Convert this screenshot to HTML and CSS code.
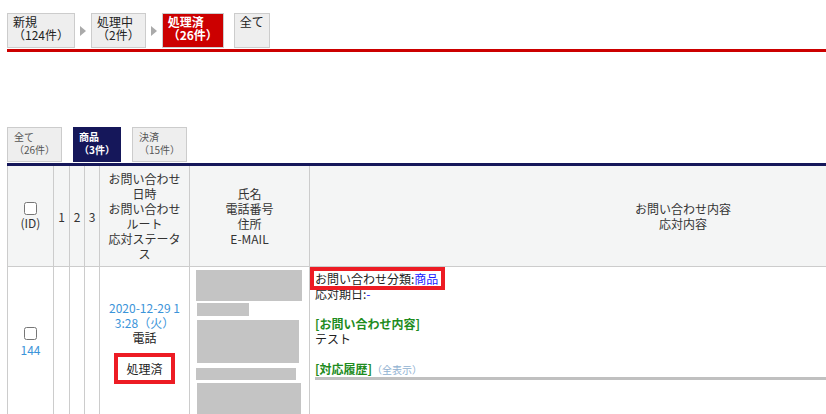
FILE: index.html
```html
<!DOCTYPE html>
<html lang="ja">
<head>
  <meta charset="UTF-8">
  <meta name="viewport" content="width=device-width, initial-scale=1.0">
  <title>お問い合わせ管理</title>
  <link rel="stylesheet" href="styles.css">
</head>
<body>
  <!-- Status tabs -->
  <div class="status-tabs">
    <a href="#" class="tab">新規<br>（124件）</a>
    <span class="arrow"></span>
    <a href="#" class="tab">処理中<br>（2件）</a>
    <span class="arrow"></span>
    <a href="#" class="tab tab-active">処理済<br>（26件）</a>
    <a href="#" class="tab tab-all">全て</a>
  </div>

  <!-- Category tabs -->
  <div class="category-tabs">
    <a href="#" class="cat-tab">全て<br>（26件）</a>
    <a href="#" class="cat-tab cat-tab-active">商品<br>（3件）</a>
    <a href="#" class="cat-tab">決済<br>（15件）</a>
  </div>

  <table class="inquiry-table">
    <colgroup>
      <col class="w-id">
      <col class="w-num">
      <col class="w-num2">
      <col class="w-num2">
      <col class="w-date">
      <col class="w-name">
      <col class="w-body">
    </colgroup>
    <thead>
      <tr>
        <th><input type="checkbox" class="check">(ID)</th>
        <th class="num">1</th>
        <th class="num">2</th>
        <th class="num">3</th>
        <th class="wrap">お問い合わせ日時<br>お問い合わせルート<br>応対ステータス</th>
        <th>氏名<br>電話番号<br>住所<br>E-MAIL</th>
        <th>お問い合わせ内容<br>応対内容</th>
      </tr>
    </thead>
    <tbody>
      <tr>
        <td class="cell-check">
          <input type="checkbox" class="check">
          <a href="#" class="id-link">144</a>
        </td>
        <td class="num"></td>
        <td class="num"></td>
        <td class="num"></td>
        <td class="cell-date wrap">
          <div class="date">2020-12-29 13:28（火）</div>
          <div>電話</div>
          <div class="status">処理済</div>
        </td>
        <td class="cell-name">
          <div class="redact r1"></div>
          <div class="redact r2"></div>
          <div class="redact r3"></div>
          <div class="redact r4"></div>
          <div class="redact r5"></div>
        </td>
        <td class="cell-body">
          <div><span class="highlight">お問い合わせ分類:<a href="#" class="link">商品</a></span></div>
          <div>応対期日:<span class="link">-</span></div>
          <div class="section-title">[お問い合わせ内容]</div>
          <div>テスト</div>
          <div class="section-title history">[対応履歴]<a href="#" class="more">（全表示）</a></div>
        </td>
      </tr>
    </tbody>
  </table>
</body>
</html>
```

FILE: styles.css
```css
/* General */
html {
  overflow: hidden;
}
body {
  margin: 0;
  background: #fff;
  color: #222;
  font-family: "Noto Sans CJK JP", sans-serif;
  font-size: 12px;
  overflow: hidden;
}
a {
  text-decoration: none;
}

/* Status tabs */
.status-tabs {
  display: flex;
  margin: 13px 0 0 7px;
  padding-bottom: 1px;
  border-bottom: 3px solid #cc0000;
}
.tab {
  box-sizing: border-box;
  height: 35px;
  padding: 1px 5px 0;
  border: 1px solid #ccc;
  background: #eee;
  color: #222;
  line-height: 13px;
}
.tab-active {
  background: #cc0000;
  color: #fff;
  font-weight: bold;
}
.tab-all {
  margin-left: 10px;
}
.arrow {
  align-self: center;
  width: 0;
  height: 0;
  margin: 1px 5px 0;
  border-left: 6px solid #aaa;
  border-top: 5px solid transparent;
  border-bottom: 5px solid transparent;
}

/* Category tabs */
.category-tabs {
  display: flex;
  gap: 11px;
  margin: 75px 0 0 7px;
  padding-bottom: 1px;
  border-bottom: 3px solid #15175a;
}
.cat-tab {
  box-sizing: border-box;
  height: 35px;
  padding: 3px 6px 0;
  border: 1px solid #ccc;
  background: #eee;
  color: #555;
  font-size: 10px;
  line-height: 12.5px;
}
.cat-tab-active {
  padding: 3px 5px 0;
  background: #15175a;
  border-color: #15175a;
  color: #fff;
  font-weight: bold;
}

/* Table */
.inquiry-table {
  margin-left: 7px;
  width: 1049px;
  border-collapse: collapse;
  table-layout: fixed;
  line-height: 15px;
}
.w-id { width: 46px; }
.w-num { width: 16px; }
.w-num2 { width: 15px; }
.w-date { width: 90px; }
.w-name { width: 120px; }
.w-body { width: 747px; }

.inquiry-table th,
.inquiry-table td {
  border: 1px solid #ccc;
}
.inquiry-table thead th {
  border-top: none;
  padding: 5px 7px;
  background: #f4f5f5;
  color: #333;
  font-weight: normal;
  text-align: center;
  vertical-align: middle;
}
.inquiry-table .num {
  padding: 5px 0;
  text-align: center;
}
.wrap {
  word-break: break-all;
}
.check {
  display: block;
  margin: 0 auto;
  width: 13px;
  height: 13px;
}

.cell-check {
  text-align: center;
  vertical-align: middle;
}
.id-link {
  display: block;
  margin-top: 2px;
  color: #3b94d9;
}
.cell-date {
  padding: 0 7px;
  text-align: center;
  vertical-align: middle;
}
.date {
  color: #3b94d9;
}
.status {
  width: fit-content;
  margin: 8px auto 0;
  padding: 4px 8px;
  border: 4px solid #ed1c24;
}

/* Redacted personal data */
.cell-name {
  padding: 3px 6px 2px;
  vertical-align: top;
}
.redact {
  background: #c4c4c4;
}
.r1 { width: 106px; height: 31px; }
.r2 { width: 52px; height: 13px; margin: 2px 0 0 1px; }
.r3 { width: 102px; height: 43px; margin: 4px 0 0 1px; }
.r4 { width: 100px; height: 12px; margin-top: 5px; }
.r5 { width: 104px; height: 32px; margin: 3px 0 0 1px; }

/* Inquiry body */
.cell-body {
  padding: 4px 5px;
  vertical-align: top;
}
.highlight {
  margin-left: -2px;
  padding: 0 4px 0 2px;
  outline: 4px solid #ed1c24;
  outline-offset: -1px;
}
.link {
  color: #1a1aff;
}
.section-title {
  margin-top: 15px;
  color: #1e8c1e;
  font-weight: bold;
}
.history {
  border-bottom: 3px solid #c0c0c0;
}
.more {
  color: #8fb0d0;
  font-size: 10px;
  font-weight: normal;
}
```
